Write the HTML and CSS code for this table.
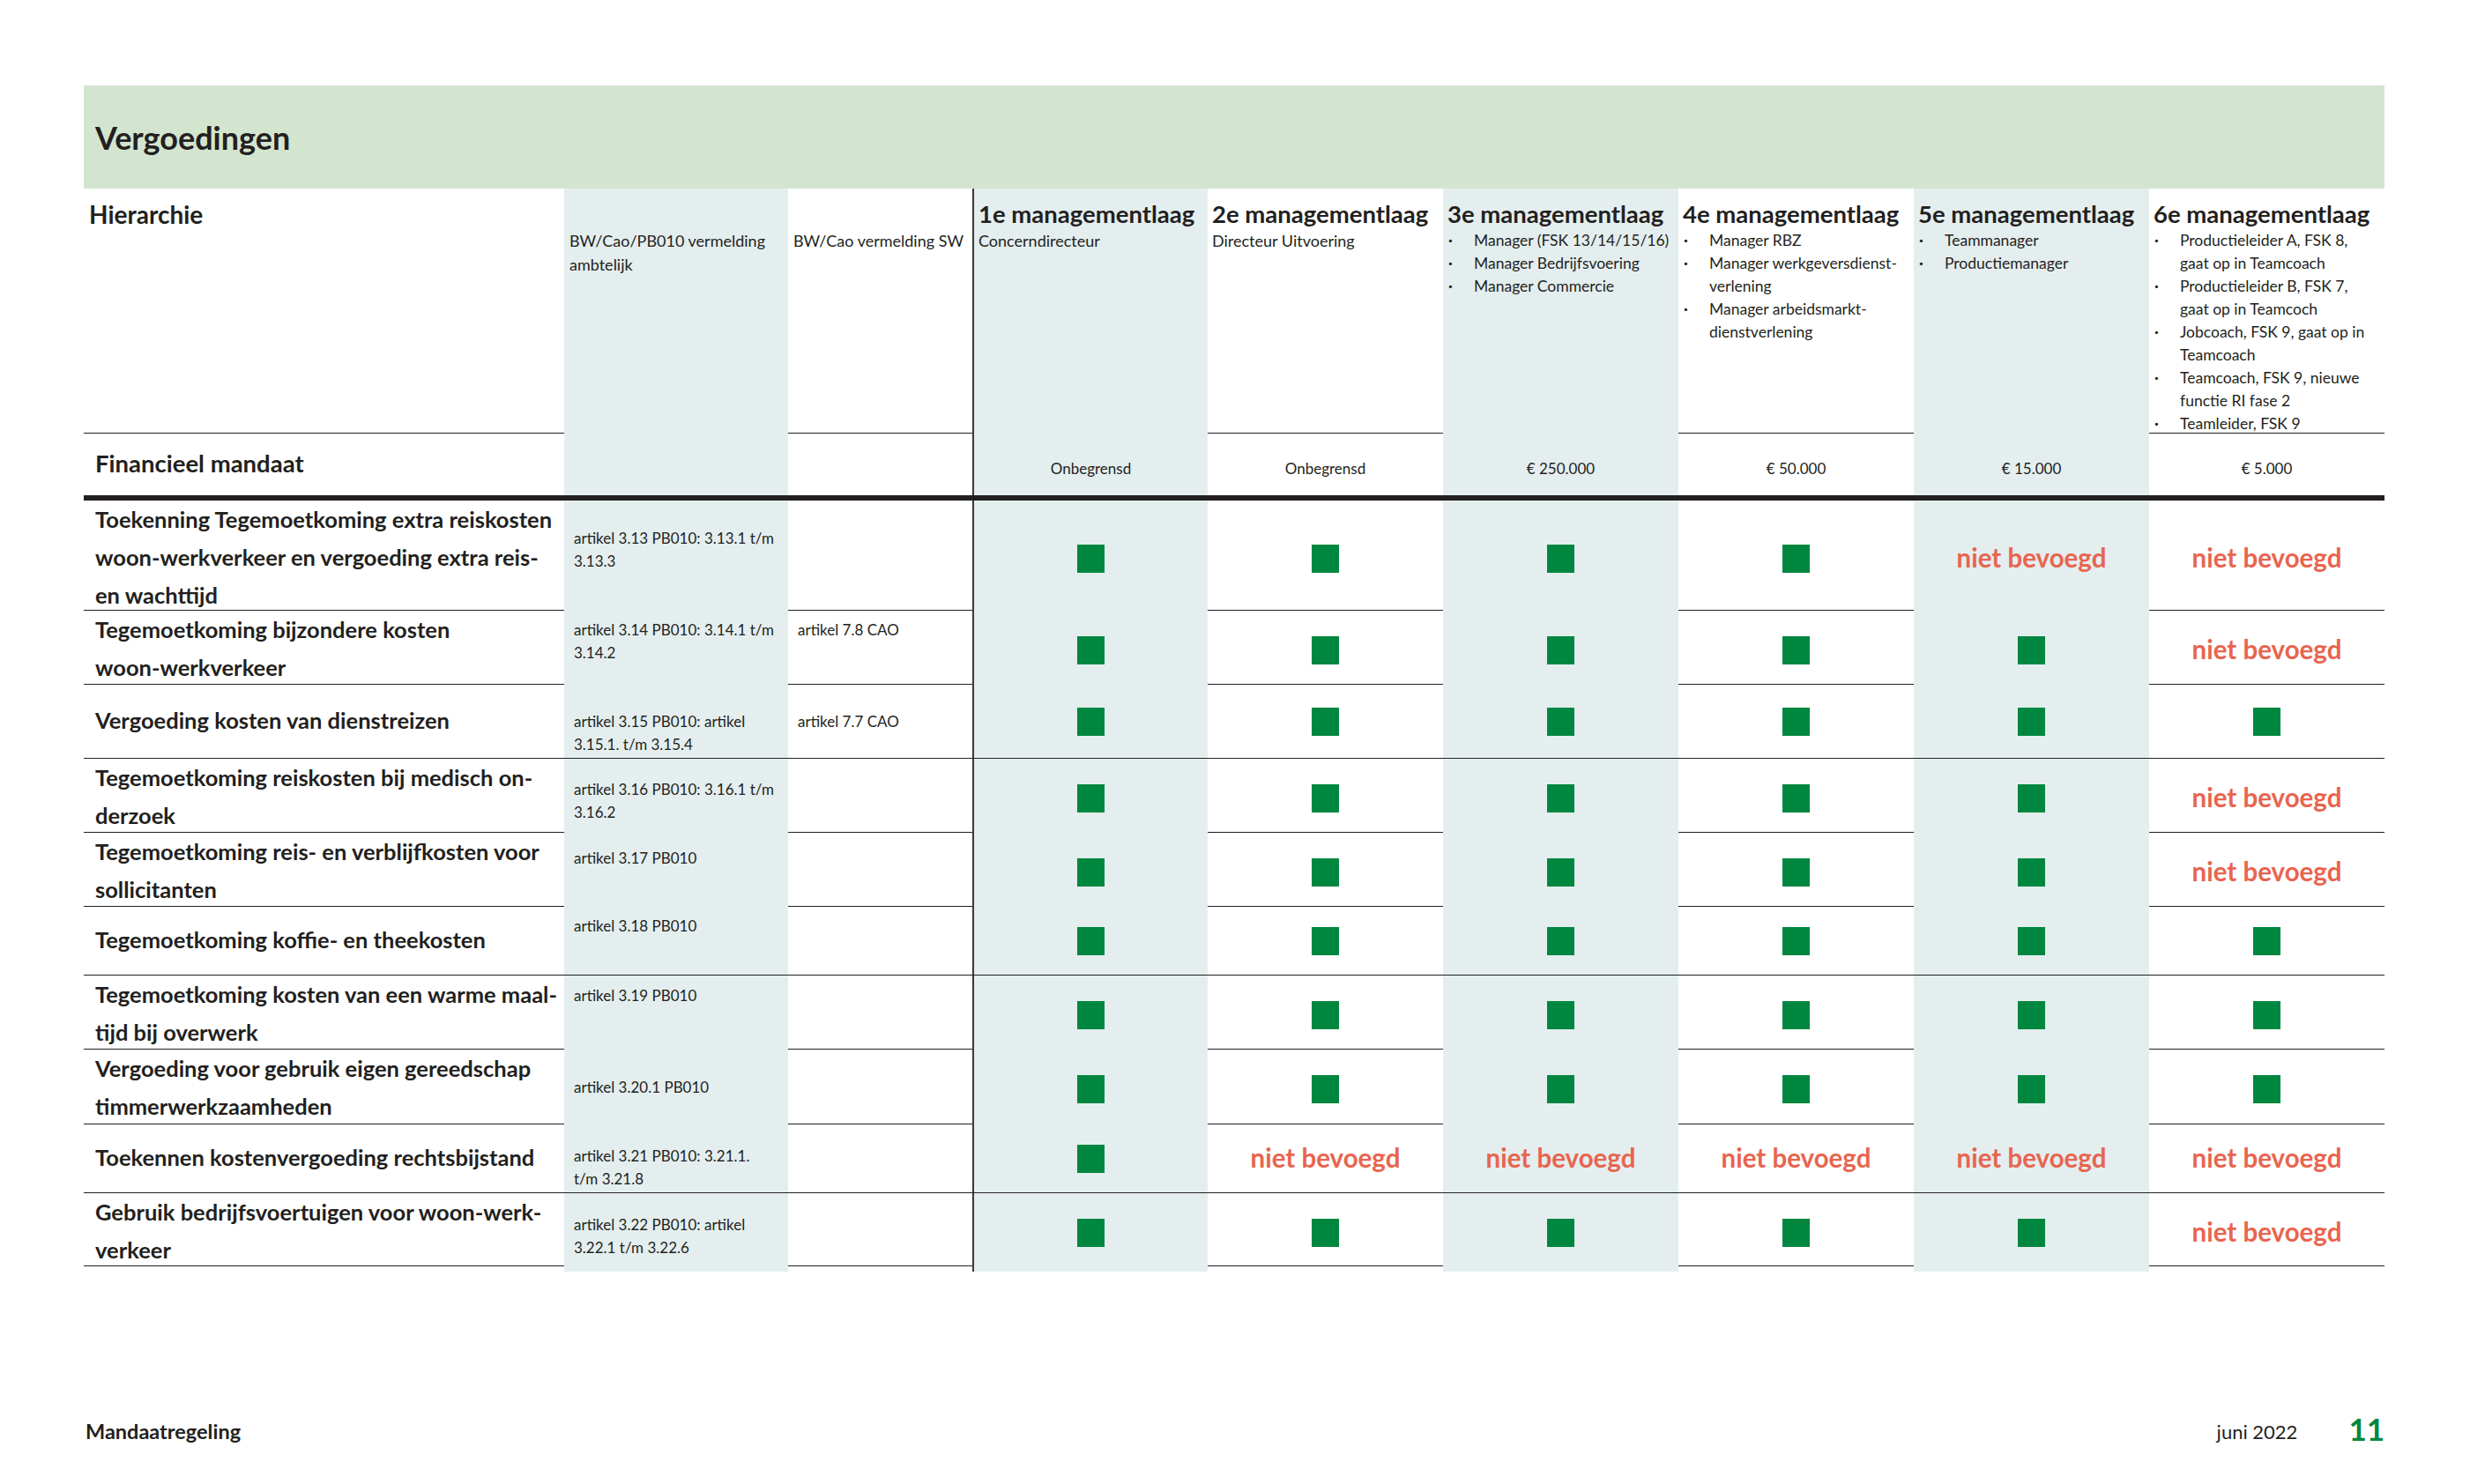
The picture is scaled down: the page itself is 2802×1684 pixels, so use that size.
FILE: index.html
```html
<!DOCTYPE html>
<html lang="nl">
<head>
<meta charset="utf-8">
<title>Mandaatregeling – Vergoedingen</title>
<link rel="stylesheet" href="styles.css">
</head>
<body>
<div class="page">
  <div class="banner"><h1>Vergoedingen</h1></div>

  <div class="table">
    <div class="row head">
      <div class="c hlabel">Hierarchie</div>
      <div class="c t hsrc">BW/Cao/PB010 vermelding<br>ambtelijk</div>
      <div class="c hsrc">BW/Cao vermelding SW</div>
      <div class="c t m first">
        <div class="mtitle">1e managementlaag</div>
        <div class="msub">Concerndirecteur</div>
      </div>
      <div class="c m">
        <div class="mtitle">2e managementlaag</div>
        <div class="msub">Directeur Uitvoering</div>
      </div>
      <div class="c t m">
        <div class="mtitle">3e managementlaag</div>
        <ul class="mlist">
          <li>Manager (FSK 13/14/15/16)</li>
          <li>Manager Bedrijfsvoering</li>
          <li>Manager Commercie</li>
        </ul>
      </div>
      <div class="c m">
        <div class="mtitle">4e managementlaag</div>
        <ul class="mlist">
          <li>Manager RBZ</li>
          <li>Manager werkgeversdienst-<br>verlening</li>
          <li>Manager arbeidsmarkt-<br>dienstverlening</li>
        </ul>
      </div>
      <div class="c t m">
        <div class="mtitle">5e managementlaag</div>
        <ul class="mlist">
          <li>Teammanager</li>
          <li>Productiemanager</li>
        </ul>
      </div>
      <div class="c m">
        <div class="mtitle">6e managementlaag</div>
        <ul class="mlist">
          <li>Productieleider A, FSK 8,<br>gaat op in Teamcoach</li>
          <li>Productieleider B, FSK 7,<br>gaat op in Teamcoch</li>
          <li>Jobcoach, FSK 9, gaat op in<br>Teamcoach</li>
          <li>Teamcoach, FSK 9, nieuwe<br>functie RI fase 2</li>
          <li>Teamleider, FSK 9</li>
        </ul>
      </div>
    </div>

    <div class="row fin">
      <div class="c label fl">Financieel mandaat</div>
      <div class="c t"></div>
      <div class="c"></div>
      <div class="c t v val first">Onbegrensd</div>
      <div class="c v val">Onbegrensd</div>
      <div class="c t v val">€ 250.000</div>
      <div class="c v val">€ 50.000</div>
      <div class="c t v val">€ 15.000</div>
      <div class="c v val">€ 5.000</div>
    </div>

    <div class="row h125">
      <div class="c label">Toekenning Tegemoetkoming extra reiskosten<br>woon-werkverkeer en vergoeding extra reis-<br>en wachttijd</div>
      <div class="c t art p30">artikel 3.13 PB010: 3.13.1 t/m<br>3.13.3</div>
      <div class="c art p30"></div>
      <div class="c t v first"><span class="ok"></span></div>
      <div class="c v"><span class="ok"></span></div>
      <div class="c t v"><span class="ok"></span></div>
      <div class="c v"><span class="ok"></span></div>
      <div class="c t v"><span class="no">niet bevoegd</span></div>
      <div class="c v"><span class="no">niet bevoegd</span></div>
    </div>

    <div class="row h84">
      <div class="c label">Tegemoetkoming bijzondere kosten<br>woon-werkverkeer</div>
      <div class="c t art p9">artikel 3.14 PB010: 3.14.1 t/m<br>3.14.2</div>
      <div class="c art p9">artikel 7.8 CAO</div>
      <div class="c t v first"><span class="ok"></span></div>
      <div class="c v"><span class="ok"></span></div>
      <div class="c t v"><span class="ok"></span></div>
      <div class="c v"><span class="ok"></span></div>
      <div class="c t v"><span class="ok"></span></div>
      <div class="c v"><span class="no">niet bevoegd</span></div>
    </div>

    <div class="row h84">
      <div class="c label">Vergoeding kosten van dienstreizen</div>
      <div class="c t art p29">artikel 3.15 PB010: artikel<br>3.15.1. t/m 3.15.4</div>
      <div class="c art p29">artikel 7.7 CAO</div>
      <div class="c t v first"><span class="ok"></span></div>
      <div class="c v"><span class="ok"></span></div>
      <div class="c t v"><span class="ok"></span></div>
      <div class="c v"><span class="ok"></span></div>
      <div class="c t v"><span class="ok"></span></div>
      <div class="c v"><span class="ok"></span></div>
    </div>

    <div class="row h84">
      <div class="c label">Tegemoetkoming reiskosten bij medisch on-<br>derzoek</div>
      <div class="c t art p22">artikel 3.16 PB010: 3.16.1 t/m<br>3.16.2</div>
      <div class="c art"></div>
      <div class="c t v first"><span class="ok"></span></div>
      <div class="c v"><span class="ok"></span></div>
      <div class="c t v"><span class="ok"></span></div>
      <div class="c v"><span class="ok"></span></div>
      <div class="c t v"><span class="ok"></span></div>
      <div class="c v"><span class="no">niet bevoegd</span></div>
    </div>

    <div class="row h84">
      <div class="c label">Tegemoetkoming reis- en verblijfkosten voor<br>sollicitanten</div>
      <div class="c t art p16">artikel 3.17 PB010</div>
      <div class="c art"></div>
      <div class="c t v first"><span class="ok"></span></div>
      <div class="c v"><span class="ok"></span></div>
      <div class="c t v"><span class="ok"></span></div>
      <div class="c v"><span class="ok"></span></div>
      <div class="c t v"><span class="ok"></span></div>
      <div class="c v"><span class="no">niet bevoegd</span></div>
    </div>

    <div class="row h78">
      <div class="c label">Tegemoetkoming koffie- en theekosten</div>
      <div class="c t art p9">artikel 3.18 PB010</div>
      <div class="c art"></div>
      <div class="c t v first"><span class="ok"></span></div>
      <div class="c v"><span class="ok"></span></div>
      <div class="c t v"><span class="ok"></span></div>
      <div class="c v"><span class="ok"></span></div>
      <div class="c t v"><span class="ok"></span></div>
      <div class="c v"><span class="ok"></span></div>
    </div>

    <div class="row h84">
      <div class="c label">Tegemoetkoming kosten van een warme maal-<br>tijd bij overwerk</div>
      <div class="c t art p10">artikel 3.19 PB010</div>
      <div class="c art"></div>
      <div class="c t v first"><span class="ok"></span></div>
      <div class="c v"><span class="ok"></span></div>
      <div class="c t v"><span class="ok"></span></div>
      <div class="c v"><span class="ok"></span></div>
      <div class="c t v"><span class="ok"></span></div>
      <div class="c v"><span class="ok"></span></div>
    </div>

    <div class="row h85">
      <div class="c label">Vergoeding voor gebruik eigen gereedschap<br>timmerwerkzaamheden</div>
      <div class="c t art p30">artikel 3.20.1 PB010</div>
      <div class="c art"></div>
      <div class="c t v first"><span class="ok"></span></div>
      <div class="c v"><span class="ok"></span></div>
      <div class="c t v"><span class="ok"></span></div>
      <div class="c v"><span class="ok"></span></div>
      <div class="c t v"><span class="ok"></span></div>
      <div class="c v"><span class="ok"></span></div>
    </div>

    <div class="row h78">
      <div class="c label">Toekennen kostenvergoeding rechtsbijstand</div>
      <div class="c t art p23">artikel 3.21 PB010: 3.21.1.<br>t/m 3.21.8</div>
      <div class="c art"></div>
      <div class="c t v first"><span class="ok"></span></div>
      <div class="c v"><span class="no">niet bevoegd</span></div>
      <div class="c t v"><span class="no">niet bevoegd</span></div>
      <div class="c v"><span class="no">niet bevoegd</span></div>
      <div class="c t v"><span class="no">niet bevoegd</span></div>
      <div class="c v"><span class="no">niet bevoegd</span></div>
    </div>

    <div class="row h83">
      <div class="c label">Gebruik bedrijfsvoertuigen voor woon-werk-<br>verkeer</div>
      <div class="c t art p23">artikel 3.22 PB010: artikel<br>3.22.1 t/m 3.22.6</div>
      <div class="c art"></div>
      <div class="c t v first"><span class="ok"></span></div>
      <div class="c v"><span class="ok"></span></div>
      <div class="c t v"><span class="ok"></span></div>
      <div class="c v"><span class="ok"></span></div>
      <div class="c t v"><span class="ok"></span></div>
      <div class="c v"><span class="no">niet bevoegd</span></div>
    </div>
  </div>

  <footer class="footer">
    <span class="doc">Mandaatregeling</span>
    <span class="right">
      <span class="date">juni 2022</span>
      <span class="pnum">11</span>
    </span>
  </footer>
</div>
</body>
</html>
```

FILE: styles.css
```css
* { box-sizing: border-box; }

html, body {
  margin: 0;
  padding: 0;
  background: #ffffff;
}

body {
  font-family: Lato, "Open Sans", "Liberation Sans", sans-serif;
  color: #231f20;
}

.page {
  width: 2802px;
  height: 1684px;
  padding: 97px 97px 0 95px;
}

.banner {
  background: #d3e5cf;
  height: 117px;
  display: flex;
  align-items: center;
  padding-left: 13px;
}

.banner h1 {
  margin: 0;
  font-size: 36px;
  font-weight: 700;
  letter-spacing: 0;
}

.row {
  display: grid;
  grid-template-columns: 545px 254px 209px repeat(6, 1fr);
  border-bottom: 1px solid #231f20;
}

.c {
  min-width: 0;
}

.t {
  background: #e4eeef;
}

.first {
  border-left: 2px solid #3a3a3a;
}

/* header row */
.head {
  height: 278px;
}

.hlabel {
  padding: 13px 0 0 6px;
  font-size: 28px;
  font-weight: 700;
  line-height: 32px;
}

.hsrc {
  padding: 46px 0 0 6px;
  font-size: 18px;
  line-height: 27px;
}

.m {
  padding: 14px 0 0 5px;
}

.mtitle {
  font-size: 27.5px;
  font-weight: 700;
  line-height: 30px;
  white-space: nowrap;
}

.msub {
  margin-top: 2px;
  font-size: 18px;
  line-height: 26px;
}

.mlist {
  list-style: none;
  margin: 2px 0 0;
  padding: 0;
  font-size: 17.5px;
  line-height: 26px;
}

.mlist li {
  position: relative;
  padding-left: 30px;
  white-space: nowrap;
}

.mlist li::before {
  content: "·";
  position: absolute;
  left: 1px;
  top: 0;
  font-weight: 700;
}

/* financial row */
.fin {
  height: 76px;
  border-bottom: 6px solid #231f20;
}

.fl.label {
  font-size: 27.5px;
  line-height: 32px;
}

.val {
  padding-top: 8px;
  font-size: 18.5px;
}

/* body rows */
.h125 { height: 125px; }
.h84 { height: 84px; }
.h85 { height: 85px; }
.h83 { height: 83px; }
.h78 { height: 78px; }

.label {
  align-self: center;
  padding: 0 0 3px 13px;
  font-size: 25.5px;
  font-weight: 700;
  line-height: 43px;
  white-space: nowrap;
}

.art {
  padding-left: 11px;
  font-size: 17px;
  line-height: 26px;
  white-space: nowrap;
}

.p9 { padding-top: 9px; }
.p10 { padding-top: 10px; }
.p16 { padding-top: 16px; }
.p22 { padding-top: 22px; }
.p23 { padding-top: 23px; }
.p29 { padding-top: 29px; }
.p30 { padding-top: 30px; }

.v {
  display: flex;
  align-items: center;
  justify-content: center;
  font-size: 17px;
}

.ok {
  display: block;
  width: 31px;
  height: 32px;
  background: #00873f;
}

.no {
  color: #e8654f;
  font-size: 29.5px;
  font-weight: 700;
  white-space: nowrap;
  margin-top: -3px;
}

/* footer */
.footer {
  margin-top: 162px;
  height: 50px;
  display: flex;
  align-items: center;
  justify-content: space-between;
  padding-left: 2px;
}

.doc {
  font-size: 23.5px;
  font-weight: 700;
}

.right {
  display: flex;
  align-items: center;
  gap: 58px;
}

.date {
  font-size: 22px;
}

.pnum {
  font-size: 35px;
  font-weight: 700;
  color: #00873f;
  margin-bottom: 6px;
}
```
